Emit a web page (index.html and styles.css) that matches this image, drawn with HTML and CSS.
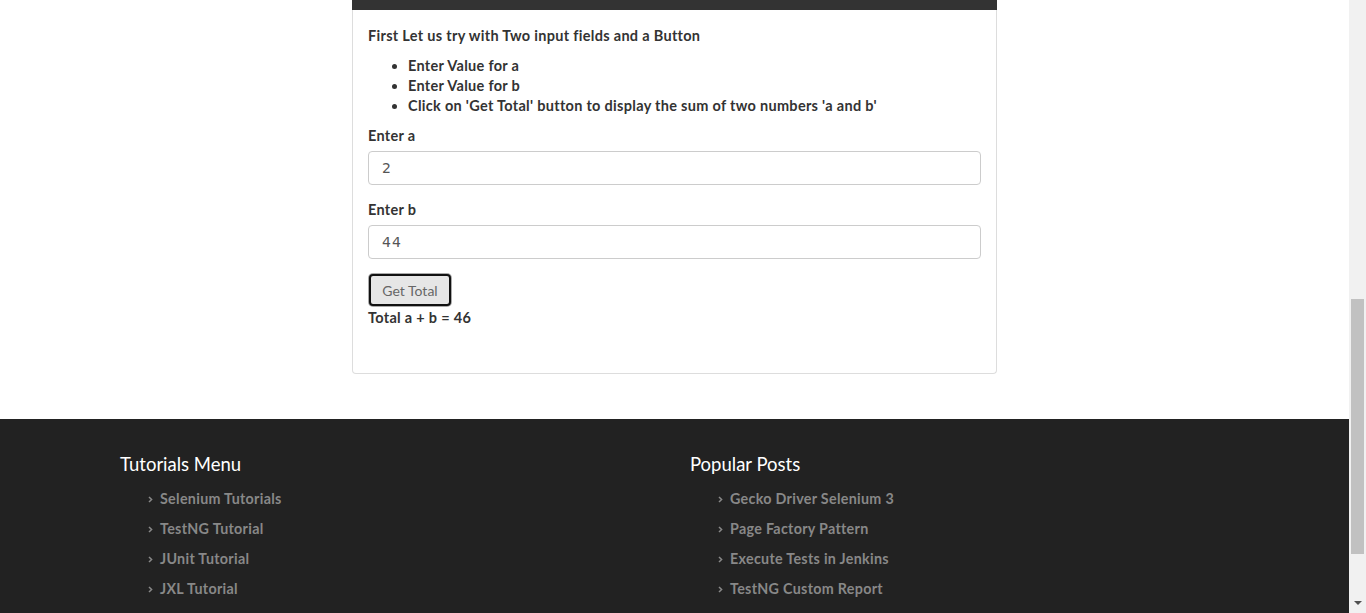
FILE: index.html
```html
<!DOCTYPE html>
<html>
<head>
<meta charset="utf-8">
<link rel="stylesheet" href="styles.css">
</head>
<body>
<div class="viewport">
  <div class="page">
    <main class="content">
      <div class="card">
        <div class="card-heading"></div>
        <div class="card-body">
          <p class="intro">First Let us try with Two input fields and a Button</p>
          <ul class="steps">
            <li>Enter Value for a</li>
            <li>Enter Value for b</li>
            <li>Click on 'Get Total' button to display the sum of two numbers 'a and b'</li>
          </ul>
          <div class="form-group">
            <label class="label">Enter a</label>
            <div class="input">2</div>
          </div>
          <div class="form-group">
            <label class="label">Enter b</label>
            <div class="input">44</div>
          </div>
          <button class="btn">Get Total</button>
          <div class="total">Total a + b = 46</div>
        </div>
      </div>
    </main>
    <footer class="footer">
      <div class="footer-col">
        <h3 class="footer-title">Tutorials Menu</h3>
        <ul class="footer-list">
          <li><svg class="chev" viewBox="0 0 5 7"><path d="M1 1 L3.6 3.5 L1 6" /></svg>Selenium Tutorials</li>
          <li><svg class="chev" viewBox="0 0 5 7"><path d="M1 1 L3.6 3.5 L1 6" /></svg>TestNG Tutorial</li>
          <li><svg class="chev" viewBox="0 0 5 7"><path d="M1 1 L3.6 3.5 L1 6" /></svg>JUnit Tutorial</li>
          <li><svg class="chev" viewBox="0 0 5 7"><path d="M1 1 L3.6 3.5 L1 6" /></svg>JXL Tutorial</li>
        </ul>
      </div>
      <div class="footer-col">
        <h3 class="footer-title">Popular Posts</h3>
        <ul class="footer-list">
          <li><svg class="chev" viewBox="0 0 5 7"><path d="M1 1 L3.6 3.5 L1 6" /></svg>Gecko Driver Selenium 3</li>
          <li><svg class="chev" viewBox="0 0 5 7"><path d="M1 1 L3.6 3.5 L1 6" /></svg>Page Factory Pattern</li>
          <li><svg class="chev" viewBox="0 0 5 7"><path d="M1 1 L3.6 3.5 L1 6" /></svg>Execute Tests in Jenkins</li>
          <li><svg class="chev" viewBox="0 0 5 7"><path d="M1 1 L3.6 3.5 L1 6" /></svg>TestNG Custom Report</li>
        </ul>
      </div>
    </footer>
  </div>
  <div class="scrollbar">
    <div class="scroll-space-top"></div>
    <div class="scroll-thumb"></div>
    <div class="scroll-space-bottom"></div>
    <div class="scroll-arrow"></div>
  </div>
</div>
</body>
</html>
```

FILE: styles.css
```css
* { box-sizing: border-box; }
html, body {
  margin: 0;
  padding: 0;
  height: 613px;
  overflow: hidden;
  background: #fff;
}
body {
  font-family: "Lato", "Noto Sans", sans-serif;
  font-size: 14px;
  color: #333;
}
.viewport {
  display: flex;
  width: 1366px;
  height: 613px;
}
.page {
  width: 1349px;
  height: 613px;
  overflow: hidden;
  display: flex;
  flex-direction: column;
}
.content {
  display: flex;
  justify-content: center;
  padding-bottom: 45px;
}
.card {
  width: 645px;
  border: 1px solid #ddd;
  border-top: none;
  border-radius: 0 0 4px 4px;
}
.card-heading {
  height: 10px;
  background: #333;
  margin: 0 -1px;
}
.card-body {
  padding: 16px 15px 45px 15px;
}
.intro, .steps, .label, .total {
  line-height: 20px;
  font-weight: 700;
  font-size: 14.5px;
  letter-spacing: 0.3px;
}
.intro {
  margin: 0 0 10px;
}
.steps {
  margin: 0 0 10px;
  padding-left: 40px;
}
.form-group {
  display: flex;
  flex-direction: column;
  margin-bottom: 15px;
}
.label {
  margin-bottom: 5px;
}
.input {
  height: 34px;
  border: 1px solid #ccc;
  border-radius: 4px;
  padding: 0 13px;
  line-height: 32px;
  font-size: 14px;
  color: #555;
  font-family: "DejaVu Sans", sans-serif;
  letter-spacing: 1px;
}
.btn {
  display: block;
  height: 32px;
  width: 82px;
  margin: 1px 0 2px 1px;
  padding: 0;
  font-family: "Lato", sans-serif;
  font-size: 14px;
  font-weight: 400;
  color: #666;
  background: #e6e6e6;
  border: 2px solid #111;
  border-radius: 4px;
  box-shadow: 0 0 0 1px #aaa;
}
.footer {
  background: #222;
  flex: 1;
  display: flex;
  padding: 34px 0 0 120px;
}
.footer-col {
  width: 570px;
}
.footer-title {
  margin: 0 0 8px;
  font-size: 18.5px;
  font-weight: 400;
  line-height: 22px;
  color: #fff;
}
.footer-list {
  list-style: none;
  margin: 0;
  padding: 0 0 0 28px;
}
.footer-list li {
  display: flex;
  align-items: center;
  height: 30px;
  color: #888;
  font-weight: 700;
  font-size: 14.3px;
  letter-spacing: 0.3px;
}
.chev {
  width: 5px;
  height: 7px;
  margin: 3px 7px 0 0;
  fill: none;
  stroke: #888;
  stroke-width: 1.5;
}
.scrollbar {
  width: 17px;
  height: 613px;
  background: #f1f1f1;
  display: flex;
  flex-direction: column;
  align-items: center;
}
.scroll-space-top { height: 299px; }
.scroll-thumb {
  width: 13px;
  height: 255px;
  background: #c1c1c1;
}
.scroll-space-bottom { flex: 1; }
.scroll-arrow {
  width: 0;
  height: 0;
  border-left: 4px solid transparent;
  border-right: 4px solid transparent;
  border-top: 4px solid #505050;
  margin-bottom: 8px;
}
```
